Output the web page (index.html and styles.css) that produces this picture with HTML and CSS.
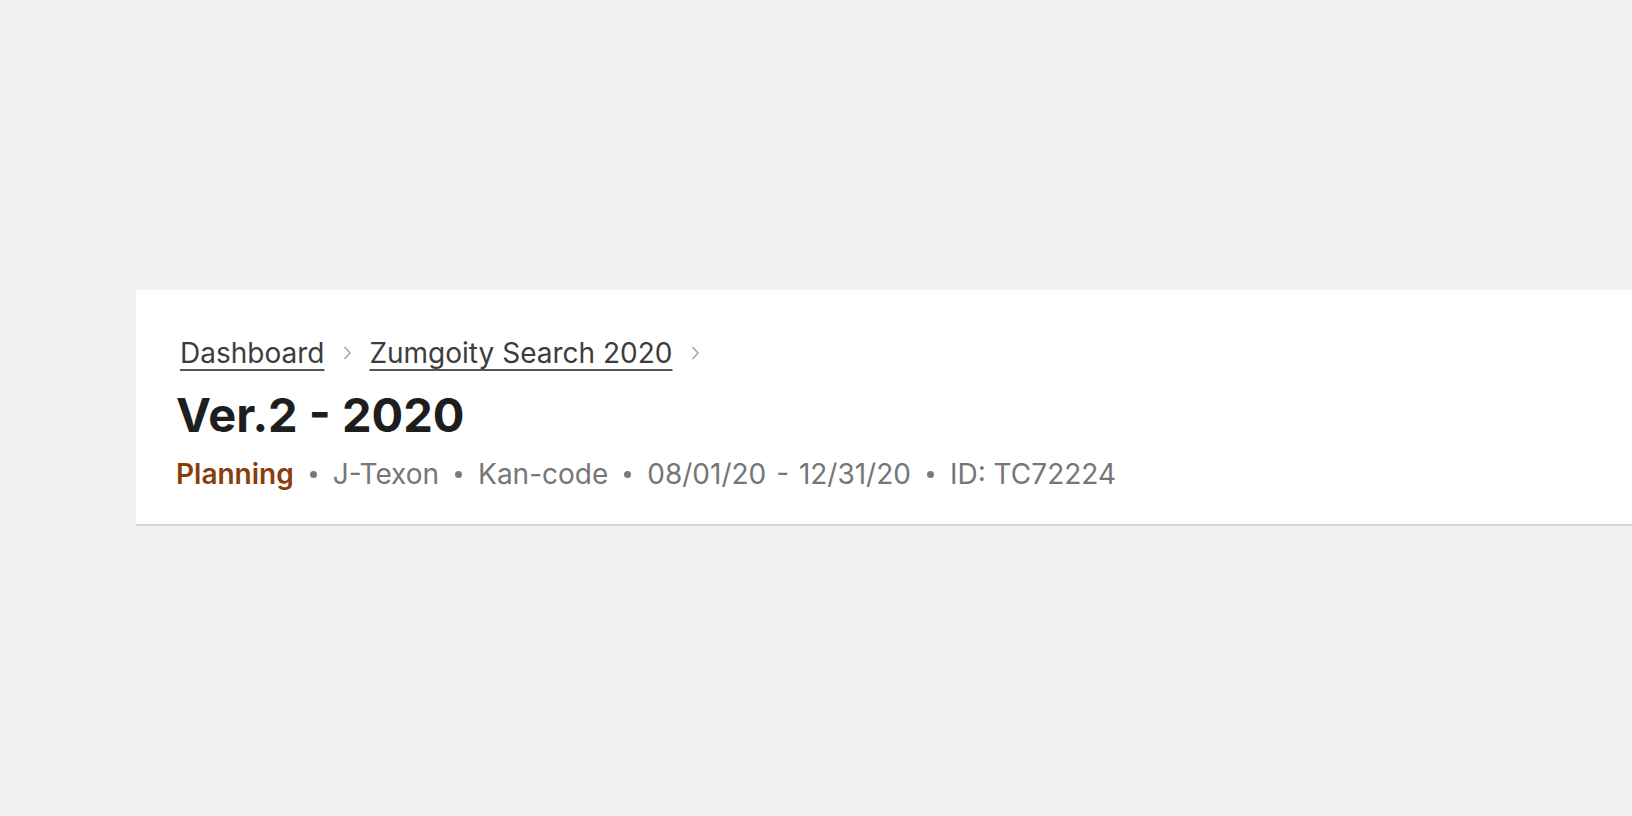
FILE: index.html
```html
<!DOCTYPE html>
<html lang="en">
<head>
<meta charset="utf-8">
<title>Ver.2 - 2020</title>
<link rel="stylesheet" href="styles.css">
</head>
<body>
  <header class="page-header">
    <nav class="breadcrumb">
      <a class="crumb" href="#">Dashboard</a>
      <span class="chev"><svg width="12" height="16" viewBox="0 0 12 16"><path d="M3.5 2 L9 8 L3.5 14" fill="none" stroke="#a6a6a6" stroke-width="1.6"/></svg></span>
      <a class="crumb" href="#">Zumgoity Search 2020</a>
      <span class="chev"><svg width="12" height="16" viewBox="0 0 12 16"><path d="M3.5 2 L9 8 L3.5 14" fill="none" stroke="#a6a6a6" stroke-width="1.6"/></svg></span>
    </nav>
    <h1 class="title">Ver.2 - 2020</h1>
    <div class="meta">
      <span class="status">Planning</span>
      <span class="dot"></span>
      <span>J-Texon</span>
      <span class="dot"></span>
      <span>Kan-code</span>
      <span class="dot"></span>
      <span class="range">08/01/20 - 12/31/20</span>
      <span class="dot"></span>
      <span>ID: TC72224</span>
    </div>
  </header>
</body>
</html>
```
FILE: styles.css
```css
html, body {
  margin: 0;
  padding: 0;
}
body {
  background: #f1f1f1;
  font-family: Inter, "Noto Sans", sans-serif;
  width: 1632px;
  height: 816px;
  overflow: hidden;
}
.page-header {
  margin: 290px 0 0 136px;
  background: #ffffff;
  border-bottom: 2px solid #d6d6d6;
  padding: 43px 0 32px 40px;
}
.breadcrumb {
  display: flex;
  align-items: center;
  height: 40px;
  font-size: 28px;
  line-height: 40px;
  padding-left: 4px;
}
.crumb {
  color: #3d3d3d;
  text-decoration: underline;
  text-decoration-thickness: 2px;
  text-underline-offset: 6px;
  text-decoration-color: #555;
}
.chev {
  display: inline-flex;
  margin: 0 16px 0 17px;
}
.title {
  margin: 14px 0 0 0;
  font-size: 47px;
  line-height: 56px;
  font-weight: 700;
  color: #1e1e1e;
}
.meta {
  margin-top: 13px;
  display: flex;
  align-items: center;
  font-size: 28px;
  line-height: 36px;
  color: #767676;
}
.status {
  color: #8a3d0c;
  font-weight: 600;
}
.range {
  word-spacing: 2px;
}
.dot {
  width: 7px;
  height: 7px;
  border-radius: 50%;
  background: #7a7a7a;
  margin: 0 16px;
}
```
